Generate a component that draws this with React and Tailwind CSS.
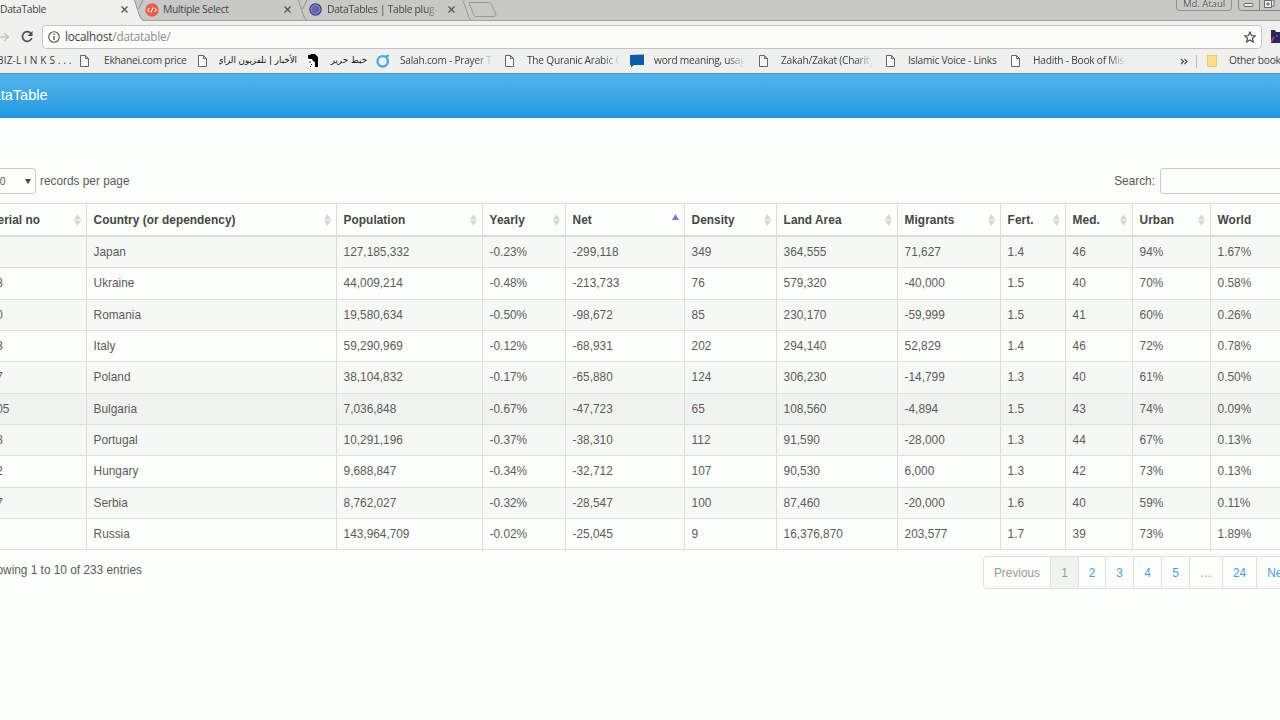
import clsx from 'clsx'

const columns = [
  { key: 'serial', label: 'Serial no', width: 'w-[104px]' },
  { key: 'country', label: 'Country (or dependency)', width: 'w-[250px]' },
  { key: 'population', label: 'Population', width: 'w-[146px]' },
  { key: 'yearly', label: 'Yearly', width: 'w-[83px]' },
  { key: 'net', label: 'Net', width: 'w-[119px]', sorted: true },
  { key: 'density', label: 'Density', width: 'w-[92px]' },
  { key: 'land', label: 'Land Area', width: 'w-[121px]' },
  { key: 'migrants', label: 'Migrants', width: 'w-[103px]' },
  { key: 'fert', label: 'Fert.', width: 'w-[65px]' },
  { key: 'med', label: 'Med.', width: 'w-[67px]' },
  { key: 'urban', label: 'Urban', width: 'w-[78px]' },
  { key: 'world', label: 'World', width: 'w-[91px]' },
]

const rows = [
  ['1', 'Japan', '127,185,332', '-0.23%', '-299,118', '349', '364,555', '71,627', '1.4', '46', '94%', '1.67%'],
  ['33', 'Ukraine', '44,009,214', '-0.48%', '-213,733', '76', '579,320', '-40,000', '1.5', '40', '70%', '0.58%'],
  ['60', 'Romania', '19,580,634', '-0.50%', '-98,672', '85', '230,170', '-59,999', '1.5', '41', '60%', '0.26%'],
  ['23', 'Italy', '59,290,969', '-0.12%', '-68,931', '202', '294,140', '52,829', '1.4', '46', '72%', '0.78%'],
  ['37', 'Poland', '38,104,832', '-0.17%', '-65,880', '124', '306,230', '-14,799', '1.3', '40', '61%', '0.50%'],
  ['105', 'Bulgaria', '7,036,848', '-0.67%', '-47,723', '65', '108,560', '-4,894', '1.5', '43', '74%', '0.09%'],
  ['88', 'Portugal', '10,291,196', '-0.37%', '-38,310', '112', '91,590', '-28,000', '1.3', '44', '67%', '0.13%'],
  ['92', 'Hungary', '9,688,847', '-0.34%', '-32,712', '107', '90,530', '6,000', '1.3', '42', '73%', '0.13%'],
  ['97', 'Serbia', '8,762,027', '-0.32%', '-28,547', '100', '87,460', '-20,000', '1.6', '40', '59%', '0.11%'],
  ['9', 'Russia', '143,964,709', '-0.02%', '-25,045', '9', '16,376,870', '203,577', '1.7', '39', '73%', '1.89%'],
]

const rowShade = ['bg-[#f6f8f5]', '', 'bg-[#f6f8f5]', '', 'bg-[#f6f8f5]', 'bg-[#f1f3f0]', 'bg-[#f6f8f5]', '', 'bg-[#f6f8f5]', '']

const pages = [
  { label: 'Previous', width: 'w-[67px]', muted: true },
  { label: '1', width: 'w-[28px]', muted: true, active: true },
  { label: '2', width: 'w-[27px]' },
  { label: '3', width: 'w-[28px]' },
  { label: '4', width: 'w-[28px]' },
  { label: '5', width: 'w-[28px]' },
  { label: '…', width: 'w-[33px]', muted: true },
  { label: '24', width: 'w-[34px]' },
  { label: 'Next', width: 'w-[46px]' },
]

const bookmarks = [
  { label: 'BIZ-L I N K S . . .', width: 'w-[80px]', text: 'w-[76px]', first: true },
  { icon: 'page', label: 'Ekhanei.com price', width: 'w-[118px]', text: 'w-[88px]', gap: 'w-[24px]' },
  { icon: 'page', label: 'الأخبار | تلفزيون الراي', width: 'w-[110px]', text: 'w-[78px]', gap: 'w-[21px]', arabic: true },
  { icon: 'face', label: 'خيط حرير', width: 'w-[68px]', text: 'w-[37px]', gap: 'w-[22px]', arabic: true },
  { icon: 'ring', label: 'Salah.com - Prayer Times', width: 'w-[129px]', text: 'w-[93px]', gap: 'w-[24px]', fade: true },
  { icon: 'page', label: 'The Quranic Arabic Corpus', width: 'w-[125px]', text: 'w-[93px]', gap: 'w-[22px]', fade: true },
  { icon: 'chat', label: 'word meaning, usage', width: 'w-[129px]', text: 'w-[91px]', gap: 'w-[24px]', fade: true },
  { icon: 'page', label: 'Zakah/Zakat (Charity)', width: 'w-[127px]', text: 'w-[92px]', gap: 'w-[22px]', fade: true },
  { icon: 'page', label: 'Islamic Voice - Links', width: 'w-[125px]', text: 'w-[96px]', gap: 'w-[22px]' },
  { icon: 'page', label: 'Hadith - Book of Miscellany', width: 'w-[169px]', text: 'w-[93px]', gap: 'w-[22px]', fade: true },
]

function BookmarkIcon({ type }) {
  if (type === 'page') {
    return (
      <svg className="h-3 w-[9px]" viewBox="0 0 9 12" fill="#fbfcfa" stroke="#666" strokeWidth="1">
        <path d="M.5.5h5l3 3v8h-8zM5.5.5v3h3" />
      </svg>
    )
  }
  if (type === 'face') {
    return (
      <svg className="h-[14px] w-[10px]" viewBox="0 0 10 14">
        <path d="M0 4h6v10H0z" fill="#fff" />
        <path d="M0 1h2l1-1h4l3 3v10H7V8L5 7 4 5H1L0 4z" fill="#000" />
        <path d="M1 8h2M3 10l1 1M2 12.500h1" stroke="#222" />
      </svg>
    )
  }
  if (type === 'ring') {
    return (
      <svg className="h-[14px] w-[14px]" viewBox="0 0 14 14" fill="none" stroke="#52a7db" strokeWidth="2.4">
        <circle cx="6.7" cy="7.3" r="5.200" />
        <path d="M9.500 2.500 13 1.500" strokeWidth="2" />
      </svg>
    )
  }
  return (
    <svg className="h-[14px] w-[14px]" viewBox="0 0 14 14">
      <path d="M0 1 14 .5V11H4l-3 2.500V11H0z" fill="#0f5ba8" />
    </svg>
  )
}

function CloseIcon() {
  return (
    <svg className="h-[7px] w-[7px] shrink-0" viewBox="0 0 7 7" stroke="#555" strokeWidth="1.3">
      <path d="m.5.5 6 6m0-6-6 6" />
    </svg>
  )
}

function TabEdge({ front }) {
  return (
    <svg className="h-[21px] w-[12px] shrink-0" viewBox="0 0 12 21" fill="none">
      {front && <path d="M0 0h1c2 2 6 18 9 21H0z" fill="#f0f1ef" />}
      <path d="M1 0c2 2 5 19 9 20.500M5.500 9 10 0" stroke="#8f908e" />
    </svg>
  )
}

function TabStrip() {
  return (
    <div className="flex h-[21px] items-start border-b border-[#a3a4a2] bg-[#c8c9c7] text-[10.300px] tracking-[-0.300px] text-[#444]">
      <div className="flex h-[21px] w-[133px] shrink-0 items-center bg-[#f0f1ef] pb-[2px]">
        <span className="w-[121px]">DataTable</span>
        <CloseIcon />
      </div>
      <TabEdge front />
      <div className="flex h-[19px] w-[152px] shrink-0 items-center">
        <svg className="mr-[4px] h-[14px] w-[14px]" viewBox="0 0 14 14" fill="none" stroke="#fff">
          <circle cx="7" cy="7" r="6.700" fill="#e4604e" stroke="none" />
          <path d="M4.500 5 2.500 7l2 2m5-4 2 2-2 2M8 4.500l-2 5" />
        </svg>
        <span className="w-[121px]">Multiple Select</span>
        <CloseIcon />
      </div>
      <TabEdge />
      <div className="flex h-[19px] w-[153px] shrink-0 items-center">
        <svg className="mr-[5px] h-[13px] w-[13px]" viewBox="0 0 13 13">
          <circle cx="6.500" cy="6.500" r="6.200" fill="#34357f" />
          <circle cx="6.500" cy="6.500" r="4.600" fill="#6366b5" stroke="#9b9dd3" />
        </svg>
        <span className="mr-[9px] w-[112px] overflow-hidden whitespace-nowrap [mask-image:linear-gradient(to_right,#000_88%,transparent)]">
          DataTables | Table plug-in
        </span>
        <CloseIcon />
      </div>
      <svg className="h-[21px] w-[42px] shrink-0" viewBox="0 0 42 21" fill="none" stroke="#999a98">
        <path d="M0 0c3 2 6 19 9 20.500M7 2.500h20q2 0 3 3l4 9q0 2-2 2H14q-2 0-3-3z" />
      </svg>
      <div className="ml-auto flex items-start">
        <div className="mr-[6px] flex h-[11px] w-[56px] items-center justify-center rounded-b border border-t-0 border-[#929391] pb-[2px] text-[9.500px] leading-none tracking-normal text-[#4e4e4e] [text-shadow:0_0_2px_#fff]">
          Md. Ataul
        </div>
        <svg className="h-[11px] w-[42px]" viewBox="0 0 42 11" fill="none" stroke="#858684">
          <path d="M.5 0v8q0 2.500 3 2.500H42M21.500 0v10" />
          <rect x="6" y="3.500" width="9" height="3" rx="1" fill="#eee" stroke="#666" />
          <path d="M30 0h6v6h-3M26.500.500h7v7h-7z" fill="#eee" stroke="#666" />
          <path d="M29 3h2v2h-2z" stroke="#666" />
        </svg>
      </div>
    </div>
  )
}

function AddressBar() {
  return (
    <div className="flex h-[31px] items-center bg-[#f0f1ef]">
      <svg className="h-[14px] w-[42px] shrink-0" viewBox="0 0 42 14" fill="none">
        <path d="M0 7h8M4 3l4.500 4L4 11" stroke="#c3c4c2" strokeWidth="1.500" />
        <path d="M31 3.500A4.800 4.800 0 1 0 31.800 8" stroke="#4f504e" strokeWidth="1.700" />
        <path d="M32.500 1v5h-5z" fill="#4f504e" />
      </svg>
      <div className="flex h-6 w-[1220px] shrink-0 items-center rounded-sm border border-[#c2c3c1] bg-[#fcfdfb] pt-px pl-[5px] text-[11.700px] tracking-[-0.180px]">
        <svg className="mr-[5px] h-3 w-3" viewBox="0 0 12 12" fill="none" stroke="#555">
          <circle cx="6" cy="6" r="5.300" strokeWidth="1.100" />
          <path d="M6 5v4M6 2.700v1.300" strokeWidth="1.300" />
        </svg>
        <span className="text-[#3b3c3a]">localhost</span>
        <span className="text-[#8b8c8a]">/datatable/</span>
        <svg className="mr-[5px] ml-auto h-3 w-3" viewBox="0 0 12 12" fill="none" stroke="#4c4d4b" strokeWidth="1.200">
          <path d="m6 1 1.500 3.500 3.800.300-2.900 2.500.900 3.700L6 9l-3.300 2 .9-3.700L.7 4.800l3.800-.3z" />
        </svg>
      </div>
      <svg className="ml-[9px] h-[13px] w-[9px] shrink-0" viewBox="0 0 9 13">
        <path d="M0 0h4l1 2h4v11H0z" fill="#28285c" />
        <path d="m0 12 3-5M5 6h2" stroke="#c24464" strokeWidth="1.500" />
      </svg>
    </div>
  )
}

function BookmarksBar() {
  return (
    <div className="flex h-[21px] items-center bg-[#eff1ee] pb-[3px] text-[10.200px] tracking-[-0.250px] text-[#3e3f3d]">
      {bookmarks.map(({ icon, label, width, text, gap, fade, arabic, first }) => (
        <div key={label} className={clsx('flex shrink-0 items-center', width)}>
          {icon && (
            <span className={clsx('flex shrink-0', gap)}>
              <BookmarkIcon type={icon} />
            </span>
          )}
          <span
            dir={arabic ? 'rtl' : 'ltr'}
            className={clsx(
              'block overflow-hidden whitespace-nowrap',
              text,
              first && '-ml-[3px] tracking-[0.100px]',
              arabic && "font-['DejaVu_Sans'] text-[8.700px] tracking-normal text-[#111]",
              fade && '[mask-image:linear-gradient(to_right,#000_82%,transparent)]'
            )}
          >
            {label}
          </span>
        </div>
      ))}
      <svg className="h-[7px] w-[8px] shrink-0" viewBox="0 0 8 7" fill="none" stroke="#4c4d4b" strokeWidth="1.200">
        <path d="m1 1 2.500 2.500L1 6M4.500 1 7 3.500 4.500 6" />
      </svg>
      <span className="ml-[8px] h-[13px] w-px shrink-0 bg-[#bbbcba]" />
      <span className="mr-[12px] ml-[10px] h-3 w-[10px] shrink-0 border border-[#edcb69] bg-[#fbdf85]" />
      <span className="whitespace-nowrap">Other bookmarks</span>
    </div>
  )
}

function SortIcon({ sorted }) {
  if (sorted) {
    return (
      <svg className="mb-[6px] h-[6px] w-[7px]" viewBox="0 0 7 6">
        <path d="M3.500 0 7 6H0z" fill="#7d7bc4" />
      </svg>
    )
  }
  return (
    <svg className="h-3 w-[7px]" viewBox="0 0 7 12" fill="#d5d7d4">
      <path d="M3.500 0 7 5.500H0zM0 6.500h7L3.500 12z" />
    </svg>
  )
}

function DataTable() {
  return (
    <table className="w-[1320px] table-fixed border-separate border-spacing-0 border-t border-l border-[#dcdedb]">
      <thead>
        <tr className="h-[33px]">
          {columns.map(({ key, label, width, sorted }) => (
            <th
              key={key}
              className={clsx('border-r border-b-2 border-[#dcdedb] py-0 pr-[5px] pl-[6.600px] text-left font-bold text-[#444643]', width)}
            >
              <div className="flex items-center justify-between tracking-[0.050px] whitespace-nowrap">
                {label}
                <SortIcon sorted={sorted} />
              </div>
            </th>
          ))}
        </tr>
      </thead>
      <tbody>
        {rows.map((row, i) => (
          <tr key={row[1]} className={clsx('h-[31.330px]', rowShade[i])}>
            {row.map((value, j) => (
              <td key={columns[j].key} className="border-r border-b border-[#dcdedb] py-0 pr-0 pl-[6.600px]">
                {value}
              </td>
            ))}
          </tr>
        ))}
      </tbody>
    </table>
  )
}

function Pagination() {
  return (
    <ul className="flex h-[33px] shrink-0 overflow-hidden rounded-l border border-[#dfe1de]">
      {pages.map(({ label, width, muted, active }) => (
        <li
          key={label}
          className={clsx(
            'flex shrink-0 items-center justify-center border-r border-[#dfe1de]',
            width,
            muted ? 'text-[#999b98]' : 'text-[#4a9edb]',
            active && 'bg-[#f0f2ef]'
          )}
        >
          {label}
        </li>
      ))}
    </ul>
  )
}

export default function App() {
  return (
    <div className="h-[720px] w-[1280px] overflow-hidden bg-[#fcfefb]">
      <header className="h-[73px] overflow-hidden font-['Open_Sans',sans-serif]">
        <TabStrip />
        <AddressBar />
        <BookmarksBar />
      </header>
      <nav className="flex h-[45px] items-center border-t border-b border-t-[#4a94c4] border-b-[#2e92cf] bg-linear-to-b from-[#54b4eb] to-[#1d9ae2] pt-px font-['Liberation_Sans',sans-serif] text-[14.600px] text-white">
        <span className="-ml-[18px]">DataTable</span>
      </nav>
      <main className="-ml-[18px] w-[1339px] pt-[50px] font-['Liberation_Sans',sans-serif] text-[11.850px] leading-[18px] text-[#5a5c59]">
        <div className="flex h-[26px] items-center">
          <div className="flex h-[26px] w-[54px] items-center justify-between rounded-[3px] border border-[#cacccb] pr-[4px] pl-[11px] text-[10.500px]">
            10
            <svg className="h-[5px] w-[6px]" viewBox="0 0 6 5">
              <path d="M0 0h6L3 5z" fill="#444" />
            </svg>
          </div>
          <span className="ml-[4px]">records per page</span>
          <span className="mr-[5px] ml-auto">Search:</span>
          <div className="h-[26px] w-[161px] rounded-[3px] border border-[#cacccb]" />
        </div>
        <div className="mt-[9px]">
          <DataTable />
        </div>
        <div className="mt-[6px] flex justify-between">
          <span className="mt-[5px]">Showing 1 to 10 of 233 entries</span>
          <div className="w-[338px]">
            <Pagination />
          </div>
        </div>
      </main>
    </div>
  )
}
